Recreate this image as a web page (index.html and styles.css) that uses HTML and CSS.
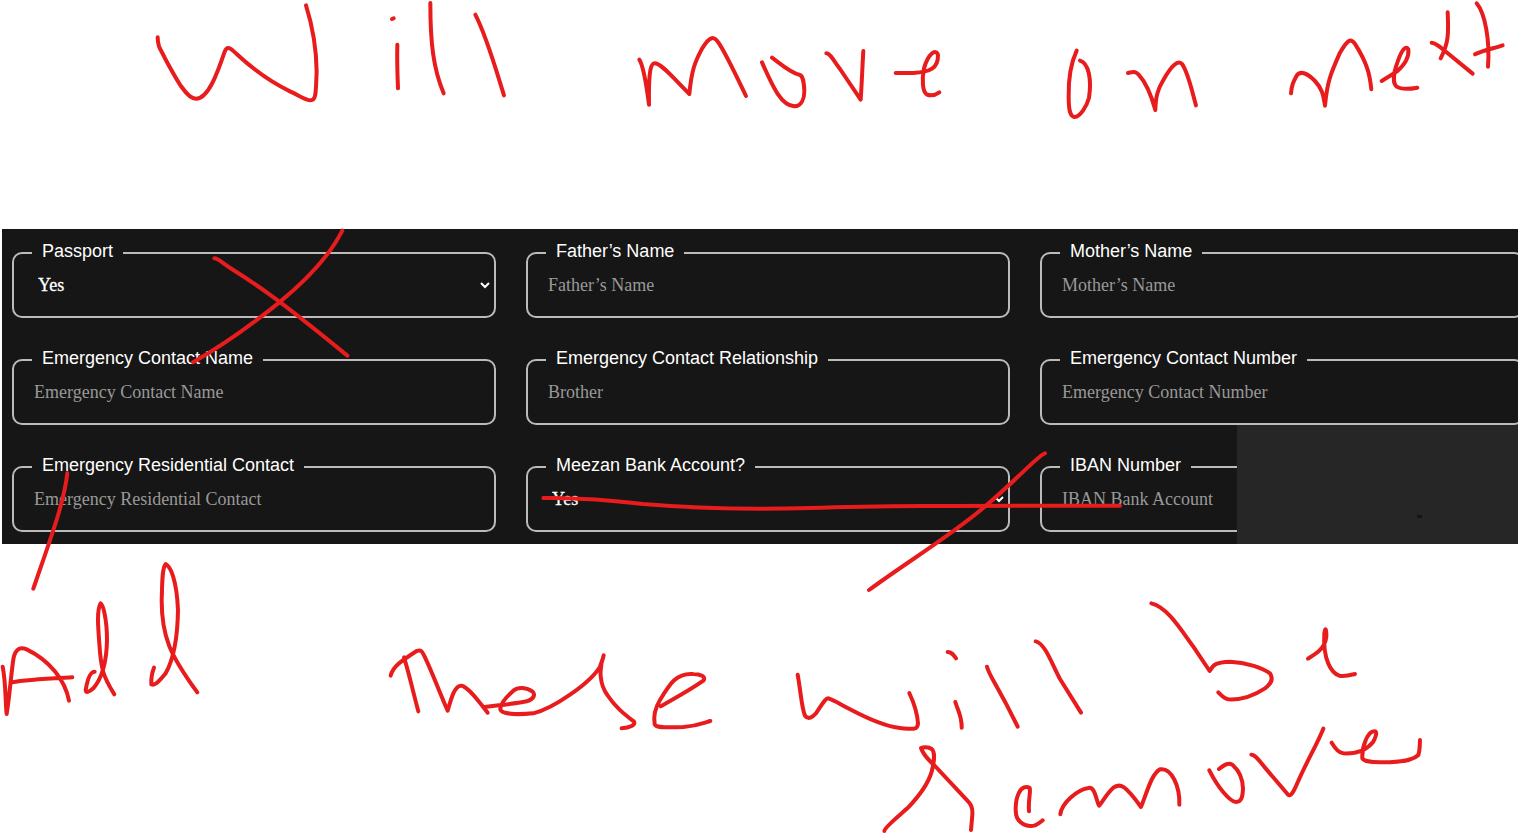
FILE: index.html
```html
<!DOCTYPE html>
<html lang="en">
<head>
<meta charset="utf-8">
<title>Employee details</title>
<link rel="stylesheet" href="styles.css">
</head>
<body>
<main class="board">
  <form class="panel">
    <fieldset class="field">
      <legend class="field-label">Passport</legend>
      <div class="select-row">
        <select class="control select" aria-label="Passport"><option>Yes</option></select>
        <svg class="arrow" viewBox="0 0 10 8"><path d="M1 2 5 6 9 2"/></svg>
      </div>
    </fieldset>
    <fieldset class="field">
      <legend class="field-label">Father’s Name</legend>
      <input class="control" type="text" placeholder="Father’s Name">
    </fieldset>
    <fieldset class="field">
      <legend class="field-label">Mother’s Name</legend>
      <input class="control" type="text" placeholder="Mother’s Name">
    </fieldset>
    <fieldset class="field">
      <legend class="field-label">Emergency Contact Name</legend>
      <input class="control" type="text" placeholder="Emergency Contact Name">
    </fieldset>
    <fieldset class="field">
      <legend class="field-label">Emergency Contact Relationship</legend>
      <input class="control" type="text" placeholder="Brother">
    </fieldset>
    <fieldset class="field">
      <legend class="field-label">Emergency Contact Number</legend>
      <input class="control" type="text" placeholder="Emergency Contact Number">
    </fieldset>
    <fieldset class="field">
      <legend class="field-label">Emergency Residential Contact</legend>
      <input class="control" type="text" placeholder="Emergency Residential Contact">
    </fieldset>
    <fieldset class="field">
      <legend class="field-label">Meezan Bank Account?</legend>
      <div class="select-row">
        <select class="control select" aria-label="Meezan Bank Account?"><option>Yes</option></select>
        <svg class="arrow" viewBox="0 0 10 8"><path d="M1 2 5 6 9 2"/></svg>
      </div>
    </fieldset>
    <fieldset class="field">
      <legend class="field-label">IBAN Number</legend>
      <input class="control" type="text" placeholder="IBAN Bank Account">
    </fieldset>
    <div class="cover"><span class="speck"></span></div>
  </form>

  <!-- Freehand pen strokes over the board -->
  <svg class="ink" viewBox="0 0 1518 833" role="img" aria-label="Will move on next. Add. These will be removed.">
    <g transform="translate(140 0) scale(.33333)">
      <path d="M53 112C53 140 62 148 75 175C110 240 140 296 168 296C205 296 232 220 254 155C262 135 272 145 290 162C350 218 400 250 450 274C480 288 498 301 512 301C530 301 527 270 530 215C529 130 515 70 498 16"/>
      <path d="M756 57 761 55M772 134C771 180 772 220 774 265M871 9C871 130 880 205 911 280M1006 44C1040 110 1065 200 1092 286"/>
    </g>
    <g transform="translate(620 20) scale(.33333)">
      <path d="M58 119C72 140 80 200 87 254C86 180 88 130 104 130C125 130 160 175 208 222C215 150 225 125 245 88C270 45 282 48 297 70C320 105 350 170 378 228"/>
      <path d="M426 127C460 205 485 257 523 259C545 258 553 235 553 212C552 180 545 166 540 165C510 158 480 130 456 113"/>
      <path d="M619 100C630 100 640 120 660 147L722 239C726 180 727 140 730 93"/>
      <path d="M827 159 880 159C930 156 955 145 954 105C948 85 925 100 912 145C905 180 908 215 920 223C935 230 945 226 958 217"/>
    </g>
    <g transform="translate(1040 0) scale(.33333)">
      <path d="M110 152C90 195 85 235 86 290C86 340 93 350 104 351C120 350 140 320 147 293C155 240 147 190 120 182"/>
      <path d="M264 219C280 215 285 213 296 224C320 250 335 290 346 330C347 290 353 268 370 240C395 195 415 178 427 193C445 220 455 270 468 316"/>
      <path d="M753 280C755 255 760 245 770 227C780 212 800 217 825 243C850 270 850 290 855 317C862 240 875 215 900 158C925 115 933 115 946 133C985 195 990 230 994 268"/>
      <path d="M1025 243 1070 215C1100 190 1107 165 1105 148C1097 135 1085 150 1073 185C1060 220 1058 250 1070 260C1085 270 1110 267 1132 263"/>
      <path d="M1223 37C1226 100 1226 130 1202 175M1175 128C1190 130 1200 140 1215 153L1298 221"/>
      <path d="M1310 10C1335 40 1350 120 1344 200M1305 163C1325 152 1365 144 1388 136"/>
    </g>
    <g transform="translate(0 220) scale(.33333)">
      <path d="M643 115C655 115 665 128 700 150C780 200 850 250 1042 407M1027 32C990 105 920 180 838 247C760 310 670 375 579 427"/>
      <path d="M202 760C192 850 150 960 100 1106"/>
    </g>
    <g transform="translate(510 220) scale(.33333)">
      <path d="M100 834C200 832 300 840 400 852C550 865 700 870 900 864C1100 857 1300 857 1830 857"/>
      <path d="M1605 700C1585 705 1530 770 1430 855C1340 935 1200 1020 1077 1110"/>
    </g>
    <g transform="translate(0 540) scale(.33333)">
      <path d="M8 380C18 430 16 490 20 522C30 460 33 400 41 352C48 325 62 320 80 328C150 362 195 420 207 482M36 427C80 418 160 415 217 412"/>
      <path d="M284 395C270 395 262 420 257 450C257 460 267 457 280 445C310 410 320 360 321 300C321 240 310 195 302 190C290 210 294 260 298 310C303 390 310 410 343 463"/>
      <path d="M462 383C455 400 453 415 454 433C465 440 480 420 497 400C525 350 533 280 534 210C530 120 512 80 497 72C485 85 487 140 485 180C485 290 510 345 592 457"/>
    </g>
    <g transform="translate(370 630) scale(.33333)">
      <path d="M62 137C68 110 95 92 140 63C155 57 158 68 165 82C190 135 210 190 233 242C245 200 255 165 275 167C300 175 330 220 353 248M102 82C120 140 130 190 145 244"/>
      <path d="M343 231C400 224 430 222 470 214C495 206 495 192 488 185C470 172 445 170 430 182C410 200 390 222 391 238C395 252 440 255 490 250C550 235 660 160 690 110C695 95 700 85 701 76C685 120 690 165 712 195C735 230 760 250 792 275C797 285 780 293 755 295"/>
      <path d="M872 229C920 202 960 180 1000 152C1010 140 990 132 970 132C920 128 900 160 870 210C852 240 850 260 854 283C860 295 890 292 940 291C980 288 995 281 1021 273"/>
    </g>
    <g transform="translate(780 580) scale(.33333)">
      <path d="M53 284C63 340 65 385 75 407C85 420 98 412 108 400C125 375 138 350 147 356C165 362 180 373 210 388C280 425 320 440 360 444C395 447 413 452 414 430C412 400 400 365 388 339"/>
      <path d="M503 216C515 216 520 224 528 235M526 366C535 395 546 410 545 443M621 260C628 290 650 310 713 440M767 184C795 190 815 250 840 297L903 398"/>
    </g>
    <g transform="translate(1130 590) scale(.33333)">
      <path d="M64 40C110 50 150 115 190 170L239 243C250 225 255 217 300 215C350 217 400 235 420 250C430 265 425 280 405 295C370 318 330 330 295 328C280 325 273 315 265 307"/>
      <path d="M534 206C560 190 585 175 589 140C590 110 585 115 583 130C578 210 605 250 628 257C645 260 655 257 675 252"/>
    </g>
    <g transform="translate(870 720) scale(.33333)">
      <path d="M43 333C43 322 90 285 115 262C155 220 175 190 185 155C193 125 195 95 185 87C175 80 160 81 153 84C160 105 175 120 195 138L295 245C310 260 307 275 307 285L303 330"/>
      <path d="M477 274C474 240 483 215 479 204C470 198 455 200 446 220C436 240 434 280 442 295C455 318 480 320 495 316C505 312 512 306 518 301"/>
      <path d="M571 283C575 250 620 210 655 204C675 198 678 240 687 257C695 250 710 220 730 203C750 188 765 195 813 261C830 220 845 160 870 148C905 142 930 200 928 254"/>
    </g>
    <g transform="translate(1180 720) scale(.33333)">
      <path d="M88 151C115 205 150 245 168 246C185 245 188 230 189 205C188 175 175 150 158 135C145 127 135 133 117 147"/>
      <path d="M214 104C225 103 235 118 255 143L325 225C335 230 345 205 353 187C380 125 410 75 430 26"/>
      <path d="M455 68C465 85 475 98 490 100C530 102 560 90 580 65C590 45 592 33 582 34C565 35 545 75 547 115C555 127 580 126 610 127C660 127 700 120 715 105C720 90 719 80 720 60"/>
    </g>
  </svg>
</main>
</body>
</html>
```

FILE: styles.css
```css
* {
  box-sizing: border-box;
}

body {
  margin: 0;
  background: #fff;
}

.board {
  position: relative;
  width: 1518px;
  height: 833px;
  padding: 229px 0 0 2px;
  overflow: hidden;
}

.panel {
  position: relative;
  display: grid;
  grid-template-columns: repeat(3, 484px);
  grid-auto-rows: 77px;
  gap: 30px;
  height: 315px;
  padding: 12px 10px;
  overflow: hidden;
  background: #161616;
}

.field {
  min-width: 0;
  margin: 0;
  padding: 0 0 0 18px;
  border: 2px solid #bbb;
  border-radius: 10px;
}

.field-label {
  height: 24px;
  padding: 0 10px 4px;
  font: 18px/20px "Liberation Sans", Arial, sans-serif;
  color: #fff;
}

.control {
  display: block;
  width: 430px;
  height: 40px;
  margin: 0;
  padding: 0 2px;
  border: 0;
  outline: 0;
  background: transparent;
  font: 18px "Liberation Serif", "Times New Roman", serif;
  color: #fff;
}

.control::placeholder {
  color: #999;
  opacity: 1;
}

.select-row {
  display: flex;
  align-items: center;
  justify-content: space-between;
  padding-right: 4px;
}

.select {
  padding: 0 6px;
  appearance: none;
  -webkit-text-stroke: 0.3px #fff;
}

.arrow {
  width: 10px;
  height: 8px;
  fill: none;
  stroke: #fff;
  stroke-width: 2;
}

.cover {
  position: absolute;
  right: 0;
  bottom: 0;
  width: 281px;
  height: 119px;
  background: #262626;
}

.speck {
  position: absolute;
  left: 180px;
  top: 90px;
  width: 5px;
  height: 3px;
  background: #141414;
}

.ink {
  position: absolute;
  inset: 0;
  width: 1518px;
  height: 833px;
  fill: none;
  stroke: #e81c1c;
  stroke-width: 12;
  stroke-linecap: round;
  stroke-linejoin: round;
  pointer-events: none;
}
```
